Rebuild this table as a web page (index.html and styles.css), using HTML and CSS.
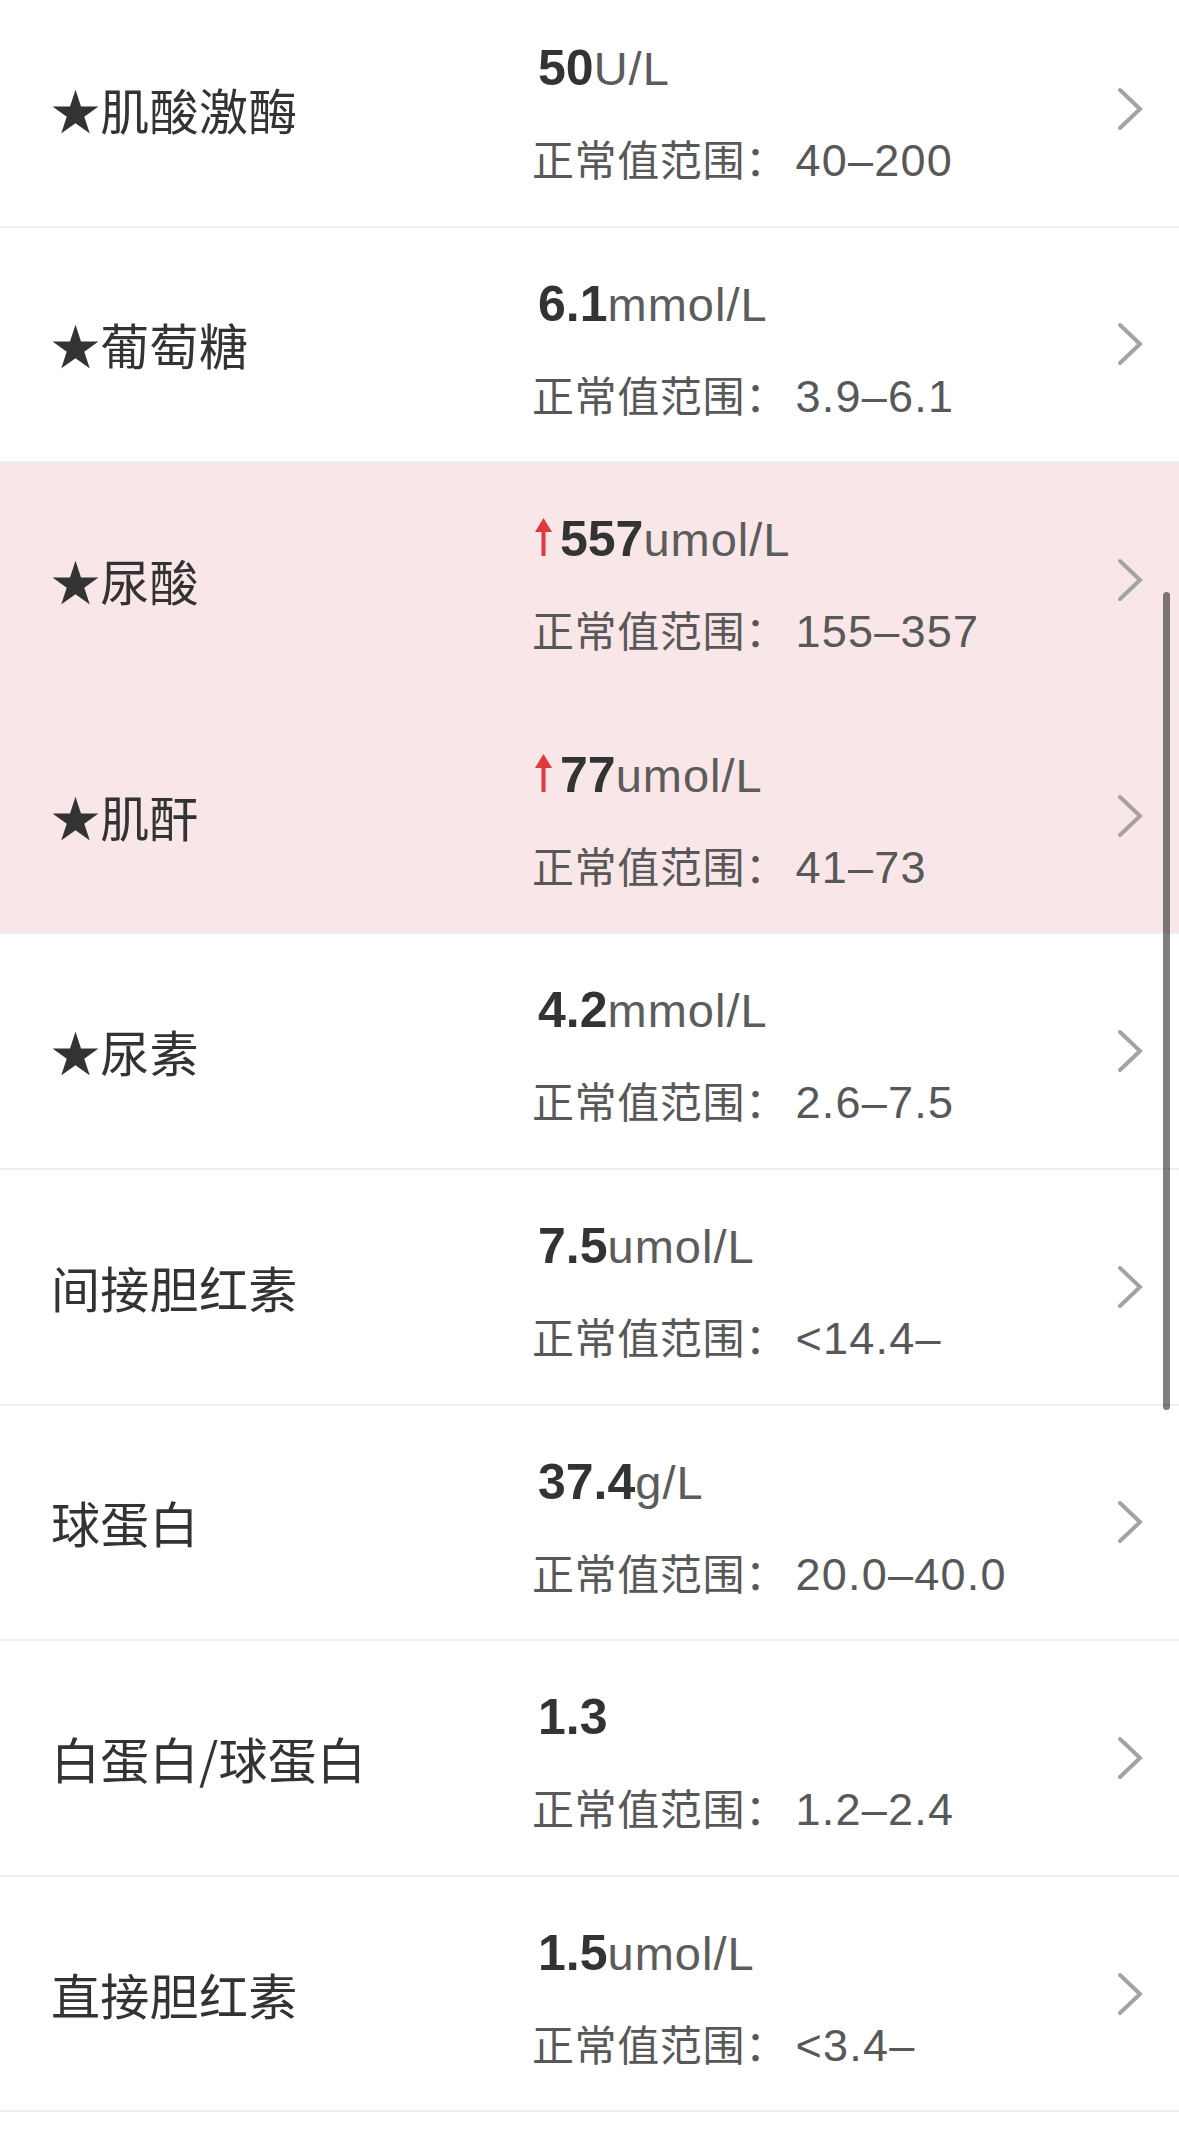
FILE: index.html
```html
<!DOCTYPE html>
<html lang="zh-CN">
<head>
<meta charset="utf-8">
<title>检验结果</title>
<link rel="stylesheet" href="styles.css">
</head>
<body>
<div class="list">
  <div class="row">
    <div class="name">★肌酸激酶</div>
    <div class="result">
      <div class="value"><b class="num">50</b><span class="unit">U/L</span></div>
      <div class="range">正常值范围：<span class="rnum">40–200</span></div>
    </div>
    <svg class="chev" viewBox="0 0 26 44" width="26" height="44"><polyline points="3,3 23,22 3,41"/></svg>
  </div>
  <div class="row">
    <div class="name">★葡萄糖</div>
    <div class="result">
      <div class="value"><b class="num">6.1</b><span class="unit">mmol/L</span></div>
      <div class="range">正常值范围：<span class="rnum">3.9–6.1</span></div>
    </div>
    <svg class="chev" viewBox="0 0 26 44" width="26" height="44"><polyline points="3,3 23,22 3,41"/></svg>
  </div>
  <div class="row alert">
    <div class="name">★尿酸</div>
    <div class="result">
      <div class="value"><svg class="up" viewBox="0 0 17 38" width="17" height="38"><polygon points="8.5,0 0,14 17,14"/><rect x="6.5" y="12" width="4" height="26"/></svg><b class="num">557</b><span class="unit">umol/L</span></div>
      <div class="range">正常值范围：<span class="rnum">155–357</span></div>
    </div>
    <svg class="chev" viewBox="0 0 26 44" width="26" height="44"><polyline points="3,3 23,22 3,41"/></svg>
  </div>
  <div class="row alert">
    <div class="name">★肌酐</div>
    <div class="result">
      <div class="value"><svg class="up" viewBox="0 0 17 38" width="17" height="38"><polygon points="8.5,0 0,14 17,14"/><rect x="6.5" y="12" width="4" height="26"/></svg><b class="num">77</b><span class="unit">umol/L</span></div>
      <div class="range">正常值范围：<span class="rnum">41–73</span></div>
    </div>
    <svg class="chev" viewBox="0 0 26 44" width="26" height="44"><polyline points="3,3 23,22 3,41"/></svg>
  </div>
  <div class="row">
    <div class="name">★尿素</div>
    <div class="result">
      <div class="value"><b class="num">4.2</b><span class="unit">mmol/L</span></div>
      <div class="range">正常值范围：<span class="rnum">2.6–7.5</span></div>
    </div>
    <svg class="chev" viewBox="0 0 26 44" width="26" height="44"><polyline points="3,3 23,22 3,41"/></svg>
  </div>
  <div class="row">
    <div class="name">间接胆红素</div>
    <div class="result">
      <div class="value"><b class="num">7.5</b><span class="unit">umol/L</span></div>
      <div class="range">正常值范围：<span class="rnum">&lt;14.4–</span></div>
    </div>
    <svg class="chev" viewBox="0 0 26 44" width="26" height="44"><polyline points="3,3 23,22 3,41"/></svg>
  </div>
  <div class="row">
    <div class="name">球蛋白</div>
    <div class="result">
      <div class="value"><b class="num">37.4</b><span class="unit">g/L</span></div>
      <div class="range">正常值范围：<span class="rnum">20.0–40.0</span></div>
    </div>
    <svg class="chev" viewBox="0 0 26 44" width="26" height="44"><polyline points="3,3 23,22 3,41"/></svg>
  </div>
  <div class="row">
    <div class="name">白蛋白/球蛋白</div>
    <div class="result">
      <div class="value"><b class="num">1.3</b></div>
      <div class="range">正常值范围：<span class="rnum">1.2–2.4</span></div>
    </div>
    <svg class="chev" viewBox="0 0 26 44" width="26" height="44"><polyline points="3,3 23,22 3,41"/></svg>
  </div>
  <div class="row">
    <div class="name">直接胆红素</div>
    <div class="result">
      <div class="value"><b class="num">1.5</b><span class="unit">umol/L</span></div>
      <div class="range">正常值范围：<span class="rnum">&lt;3.4–</span></div>
    </div>
    <svg class="chev" viewBox="0 0 26 44" width="26" height="44"><polyline points="3,3 23,22 3,41"/></svg>
  </div>
</div>
<div class="scrollbar"></div>
</body>
</html>
```
FILE: styles.css
```css
html, body {
  margin: 0;
  padding: 0;
  background: #ffffff;
}
body {
  width: 1179px;
  height: 2133px;
  overflow: hidden;
  position: relative;
  font-family: "Liberation Sans", "Noto Sans CJK SC", sans-serif;
  color: #333333;
}
.list {
  margin-top: -8px;
}
.row {
  box-sizing: border-box;
  height: 235.6px;
  border-bottom: 2px solid #eeeeee;
  display: grid;
  grid-template-columns: 481px 1fr 26px;
  align-items: center;
  padding: 0 36px 0 51px;
  background: #ffffff;
}
.row.alert {
  background: #f9e6e8;
  border-bottom-color: #f3eeee;
}
.name {
  font-family: "Noto Sans CJK SC", sans-serif;
  font-size: 49px;
  line-height: 60px;
  letter-spacing: 0.3px;
  color: #333333;
  white-space: nowrap;
}
.result {
  align-self: stretch;
  display: flex;
  flex-direction: column;
  padding-top: 46px;
}
.value {
  font-size: 50px;
  line-height: 60px;
  height: 60px;
  white-space: nowrap;
}
.num {
  font-weight: 700;
  color: #333333;
  font-size: 50px;
}
.value > .num:first-child {
  margin-left: 6px;
}
.unit {
  font-size: 47px;
  letter-spacing: 1px;
  color: #5c5c5c;
}
.up {
  display: inline-block;
  vertical-align: baseline;
  margin: 0 8px 0 3px;
  fill: #e0393d;
}
.range {
  margin-top: 38px;
  font-size: 42px;
  line-height: 50px;
  letter-spacing: 0.6px;
  color: #585858;
  white-space: nowrap;
}
.rnum {
  display: inline-block;
  margin-left: 8px;
  font-size: 45px;
  letter-spacing: 1.2px;
}
.chev {
  display: block;
  fill: none;
  stroke: #a3a3a3;
  stroke-width: 4;
  stroke-linecap: round;
  stroke-linejoin: miter;
}
.scrollbar {
  position: absolute;
  left: 1163px;
  top: 592px;
  width: 7px;
  height: 818px;
  border-radius: 4px;
  background: rgba(0, 0, 0, 0.5);
}
```
